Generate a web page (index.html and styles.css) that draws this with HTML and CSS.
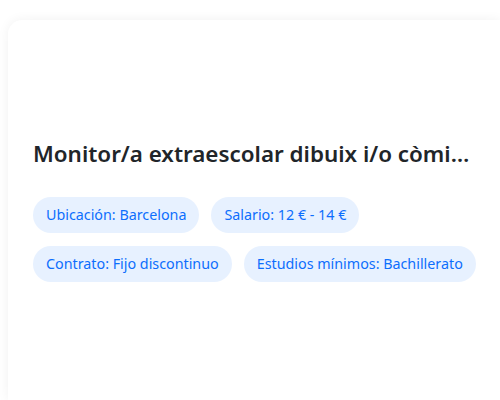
FILE: index.html
```html
<!DOCTYPE html>
<html lang="es">
<head>
    <meta charset="UTF-8">
    <meta name="viewport" content="width=device-width, initial-scale=1.0">
    <title>Oferta</title>
    <link rel="stylesheet" href="styles.css">
</head>
<body>

    <div class="card">
        <h2 class="card-title">Monitor/a extraescolar dibuix i/o còmic per a escoles de Barcelona</h2>
        <div class="tags">
            <span class="tag">Ubicación: Barcelona</span>
            <span class="tag">Salario: 12 € - 14 €</span>
            <span class="tag">Contrato: Fijo discontinuo</span>
            <span class="tag">Estudios mínimos: Bachillerato</span>
        </div>
    </div>

</body>
</html>
```

FILE: styles.css
```css
html, body {
    height: 100%;
}
body {
    font-family: "Noto Sans", sans-serif;
    margin: 0;
    padding: 20px 0 0 8px;
    box-sizing: border-box;
    background-color: #fff;
    color: #212529;
    display: flex;
    flex-direction: column;
    overflow: hidden;
}
.card {
    flex: 1;
    background-color: #fff;
    border-radius: 14px 0 0 0;
    box-shadow: 0 0 12px rgba(0,0,0,0.06);
    padding: 118px 21px 0 25px;
}
.card-title {
    font-size: 22.4px;
    font-weight: 600;
    margin: 0 0 28px;
    white-space: nowrap;
    overflow: hidden;
    text-overflow: ellipsis;
}
.tags {
    display: flex;
    flex-wrap: wrap;
    gap: 13px 12px;
}
.tag {
    background-color: #e7f1ff;
    color: #0d6efd;
    font-size: 14.3px;
    padding: 8px 13px;
    border-radius: 18px;
    line-height: 20px;
}
```
